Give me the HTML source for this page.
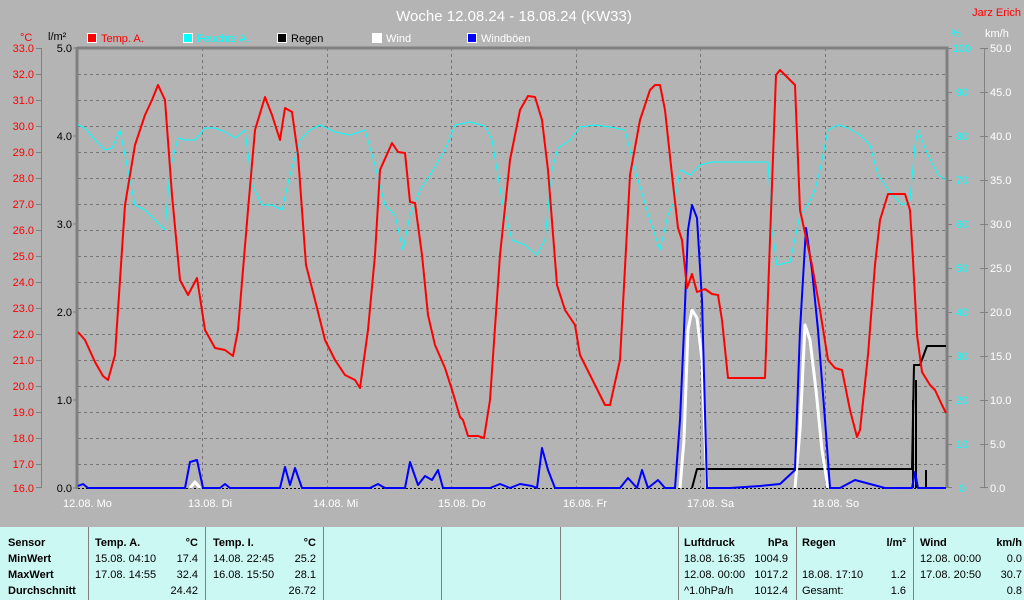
<!DOCTYPE html>
<html><head><meta charset="utf-8"><style>
html,body{margin:0;padding:0;background:#b4b4b4;width:1024px;height:600px;overflow:hidden}
svg{display:block}
text{font-family:"Liberation Sans",sans-serif}
</style></head><body>
<svg width="1024" height="600" viewBox="0 0 1024 600" xmlns="http://www.w3.org/2000/svg">
<rect width="1024" height="600" fill="#b4b4b4"/>
<text x="514" y="21" fill="#fff" font-size="15" text-anchor="middle">Woche 12.08.24 - 18.08.24 (KW33)</text>
<text x="1021" y="16" fill="#f00" font-size="11" text-anchor="end">Jarz Erich</text>
<g font-size="11">
<rect x="87.5" y="33.5" width="9" height="9" fill="#f00" stroke="#fff"/><text x="101" y="42" fill="#f00">Temp. A.</text>
<rect x="183.5" y="33.5" width="9" height="9" fill="#0ff" stroke="#fff"/><text x="197" y="42" fill="#0ff">Feuchte A.</text>
<rect x="277.5" y="33.5" width="9" height="9" fill="#000" stroke="#fff"/><text x="291" y="42" fill="#000">Regen</text>
<rect x="372.5" y="33.5" width="9" height="9" fill="#fff" stroke="#fff"/><text x="386" y="42" fill="#fff">Wind</text>
<rect x="467.5" y="33.5" width="9" height="9" fill="#00f" stroke="#fff"/><text x="481" y="42" fill="#fff">Windböen</text>
<text x="20" y="41" fill="#f00">°C</text>
<text x="48" y="40" fill="#000">l/m²</text>
<text x="951" y="37" fill="#0ff">%</text>
<text x="985" y="37" fill="#fff">km/h</text>
</g>
<g stroke="#777" stroke-dasharray="3,3" stroke-width="1">
<path d="M78 74.5H947M78 100.5H947M78 126.5H947M78 152.5H947M78 178.5H947M78 204.5H947M78 230.5H947M78 256.5H947M78 282.5H947M78 308.5H947M78 334.5H947M78 360.5H947M78 386.5H947M78 412.5H947M78 438.5H947M78 464.5H947"/>
<path d="M202.5 48V488M327.5 48V488M451.5 48V488M576.5 48V488M700.5 48V488M825.5 48V488"/>
</g>
<path d="M77 48H947V488" fill="none" stroke="#808080" stroke-width="3"/>
<path d="M77 47V489" stroke="#808080" stroke-width="3"/>
<g stroke="#808080"><path d="M41.5 48V488M73 48H78M73 136H78M73 224H78M73 312H78M73 400H78M73 488H78"/></g>
<g font-size="11" fill="#f00" text-anchor="end">
<text x="34" y="52">33.0</text><text x="34" y="78">32.0</text><text x="34" y="104">31.0</text><text x="34" y="130">30.0</text><text x="34" y="156">29.0</text><text x="34" y="182">28.0</text><text x="34" y="208">27.0</text><text x="34" y="234">26.0</text><text x="34" y="260">25.0</text><text x="34" y="286">24.0</text><text x="34" y="312">23.0</text><text x="34" y="338">22.0</text><text x="34" y="364">21.0</text><text x="34" y="390">20.0</text><text x="34" y="416">19.0</text><text x="34" y="442">18.0</text><text x="34" y="468">17.0</text><text x="34" y="492">16.0</text>
</g>
<path d="M36 48.5H41M36 74.5H41M36 100.5H41M36 126.5H41M36 152.5H41M36 178.5H41M36 204.5H41M36 230.5H41M36 256.5H41M36 282.5H41M36 308.5H41M36 334.5H41M36 360.5H41M36 386.5H41M36 412.5H41M36 438.5H41M36 464.5H41M36 487.5H41" stroke="#808080"/>
<g font-size="11" fill="#000" text-anchor="end">
<text x="72" y="52">5.0</text><text x="72" y="140">4.0</text><text x="72" y="228">3.0</text><text x="72" y="316">2.0</text><text x="72" y="404">1.0</text><text x="72" y="492">0.0</text>
</g>
<path d="M984.5 48V488M947 48.5H952M947 92.5H952M947 136.5H952M947 180.5H952M947 224.5H952M947 268.5H952M947 312.5H952M947 356.5H952M947 400.5H952M947 444.5H952M947 487.5H952M980 48.5H988M980 92.5H988M980 136.5H988M980 180.5H988M980 224.5H988M980 268.5H988M980 312.5H988M980 356.5H988M980 400.5H988M980 444.5H988M980 487.5H988" stroke="#808080"/>
<g font-size="11" fill="#0ff" text-anchor="middle">
<text x="962" y="52">100</text><text x="962" y="96">90</text><text x="962" y="140">80</text><text x="962" y="184">70</text><text x="962" y="228">60</text><text x="962" y="272">50</text><text x="962" y="316">40</text><text x="962" y="360">30</text><text x="962" y="404">20</text><text x="962" y="448">10</text><text x="962" y="492">0</text>
</g>
<g font-size="11" fill="#fff">
<text x="990" y="52">50.0</text><text x="990" y="96">45.0</text><text x="990" y="140">40.0</text><text x="990" y="184">35.0</text><text x="990" y="228">30.0</text><text x="990" y="272">25.0</text><text x="990" y="316">20.0</text><text x="990" y="360">15.0</text><text x="990" y="404">10.0</text><text x="990" y="448">5.0</text><text x="990" y="492">0.0</text>
</g>
<g font-size="11" fill="#fff">
<text x="63" y="507">12.08.  Mo</text><text x="188" y="507">13.08.  Di</text><text x="313" y="507">14.08.  Mi</text><text x="438" y="507">15.08.  Do</text><text x="563" y="507">16.08.  Fr</text><text x="687" y="507">17.08.  Sa</text><text x="812" y="507">18.08.  So</text>
</g>
<g fill="none" stroke-linejoin="round">
<polyline stroke="#0ff" stroke-width="1" points="78,125 85,128 95,140 105,150 112,148 120,130 128,170 135,205 145,210 155,220 165,230 170,170 178,138 185,140 195,140 205,128 215,128 225,132 235,138 245,130 252,185 262,205 272,205 282,210 290,175 300,140 310,130 320,125 335,132 350,135 365,130 375,165 385,205 395,215 403,250 410,215 420,190 430,175 445,150 455,125 470,122 485,126 492,140 502,200 512,240 525,245 537,255 545,240 552,170 558,148 570,140 580,127 595,125 610,127 625,130 635,170 650,220 660,250 668,215 675,200 680,170 690,175 700,165 712,162 740,162 768,162 772,230 777,265 790,262 800,215 808,205 815,190 820,170 828,130 838,125 848,128 860,135 870,145 878,175 890,192 902,205 910,200 915,145 918,130 928,155 938,175 946,180"/>
<path d="M78 488.5H946" stroke="#000" stroke-dasharray="2,2"/>
<polyline stroke="#000" stroke-width="2" points="692,488 697,469 912,469 914,365 920,365 927,346 946,346"/>
<path d="M913 488V400M916 488V380M926 488V470" stroke="#000" stroke-width="2"/>
<polyline stroke="#fff" stroke-width="3" points="190,488 195,482 200,488"/>
<polyline stroke="#fff" stroke-width="3" points="680,488 684,440 688,330 692,310 697,318 702,360 707,488"/>
<polyline stroke="#fff" stroke-width="3" points="795,488 800,430 805,325 810,340 816,390 822,450 828,488"/>
<polyline stroke="#00f" stroke-width="2" points="78,486 83,484 88,488 130,488 185,488 190,462 197,460 203,488 220,488 225,484 230,488 280,488 285,467 290,485 295,468 302,488 370,488 378,484 385,488 405,488 410,462 418,485 425,476 432,480 438,470 443,488 490,488 500,484 510,488 520,484 532,486 537,488 542,448 548,470 555,488 620,488 628,478 637,488 642,470 648,488 658,480 665,488 675,488 680,420 684,330 688,230 692,205 697,218 702,300 707,488 730,488 760,486 780,484 795,470 800,330 806,228 812,270 818,330 825,420 830,488 840,488 855,480 870,484 885,488 912,488 915,472 918,488 946,488"/>
<polyline stroke="#f00" stroke-width="2" points="78,332 85,340 95,362 103,376 108,380 115,355 125,205 135,145 145,115 152,100 158,85 165,100 172,195 180,280 188,295 197,278 205,330 215,348 225,350 233,356 238,330 248,210 255,130 265,97 272,115 280,140 285,108 292,112 298,155 306,265 315,300 325,340 335,360 345,375 355,380 360,388 368,330 375,255 380,170 392,143 398,152 405,153 410,202 415,203 422,255 428,315 435,345 445,368 453,393 460,417 463,420 468,436 478,436 484,438 490,400 500,255 510,160 520,110 528,96 535,97 542,120 548,170 557,285 565,310 575,325 580,355 590,375 600,395 605,405 610,405 620,360 630,175 640,120 650,90 655,85 660,85 665,110 672,175 678,228 682,240 687,288 692,274 697,292 705,289 712,294 718,295 722,320 728,378 765,378 770,240 776,75 780,70 790,80 795,85 800,210 812,265 820,310 828,360 835,368 842,370 850,410 857,437 860,430 868,355 875,265 880,220 888,194 905,194 910,210 913,260 917,335 922,372 930,385 935,390 942,405 946,413"/>
</g>
<rect x="0" y="527" width="1024" height="73" fill="#ccf8f4"/>
<path d="M88.5 527V600M205.5 527V600M323.5 527V600M441.5 527V600M560.5 527V600M678.5 527V600M796.5 527V600M913.5 527V600" stroke="#808080" stroke-width="1"/>
<g font-size="11" fill="#000">
<g font-weight="bold">
<text x="8" y="546">Sensor</text><text x="8" y="562">MinWert</text><text x="8" y="578">MaxWert</text><text x="8" y="594">Durchschnitt</text>
<text x="95" y="546">Temp. A.</text><text x="198" y="546" text-anchor="end">°C</text>
<text x="213" y="546">Temp. I.</text><text x="316" y="546" text-anchor="end">°C</text>
<text x="684" y="546">Luftdruck</text><text x="788" y="546" text-anchor="end">hPa</text>
<text x="802" y="546">Regen</text><text x="906" y="546" text-anchor="end">l/m²</text>
<text x="920" y="546">Wind</text><text x="1022" y="546" text-anchor="end">km/h</text>
</g>
<text x="95" y="562">15.08.  04:10</text><text x="198" y="562" text-anchor="end">17.4</text>
<text x="95" y="578">17.08.  14:55</text><text x="198" y="578" text-anchor="end">32.4</text>
<text x="198" y="594" text-anchor="end">24.42</text>
<text x="213" y="562">14.08.  22:45</text><text x="316" y="562" text-anchor="end">25.2</text>
<text x="213" y="578">16.08.  15:50</text><text x="316" y="578" text-anchor="end">28.1</text>
<text x="316" y="594" text-anchor="end">26.72</text>
<text x="684" y="562">18.08.  16:35</text><text x="788" y="562" text-anchor="end">1004.9</text>
<text x="684" y="578">12.08.  00:00</text><text x="788" y="578" text-anchor="end">1017.2</text>
<text x="684" y="594">^1.0hPa/h</text><text x="788" y="594" text-anchor="end">1012.4</text>
<text x="802" y="578">18.08.  17:10</text><text x="906" y="578" text-anchor="end">1.2</text>
<text x="802" y="594">Gesamt:</text><text x="906" y="594" text-anchor="end">1.6</text>
<text x="920" y="562">12.08.  00:00</text><text x="1022" y="562" text-anchor="end">0.0</text>
<text x="920" y="578">17.08.  20:50</text><text x="1022" y="578" text-anchor="end">30.7</text>
<text x="1022" y="594" text-anchor="end">0.8</text>
</g>
</svg>
</body></html>
